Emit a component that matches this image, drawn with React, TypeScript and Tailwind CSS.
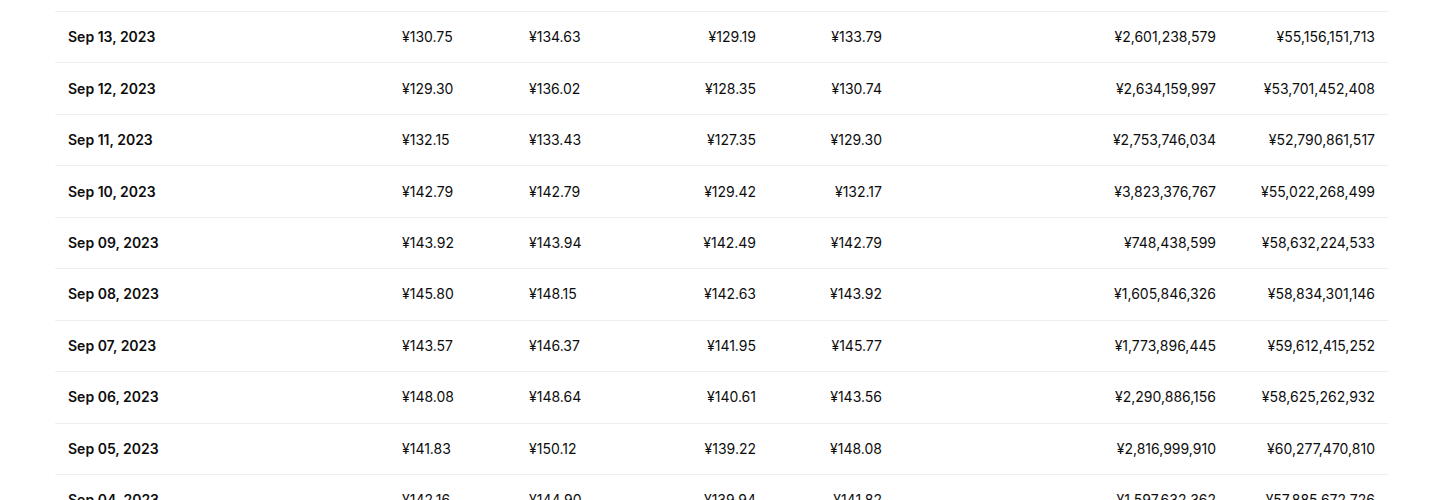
import React from "react";

type Row = {
  date: string;
  open: string;
  high: string;
  low: string;
  close: string;
  volume: string;
  marketCap: string;
};

const rows: Row[] = [
  { date: "Sep 13, 2023", open: "¥130.75", high: "¥134.63", low: "¥129.19", close: "¥133.79", volume: "¥2,601,238,579", marketCap: "¥55,156,151,713" },
  { date: "Sep 12, 2023", open: "¥129.30", high: "¥136.02", low: "¥128.35", close: "¥130.74", volume: "¥2,634,159,997", marketCap: "¥53,701,452,408" },
  { date: "Sep 11, 2023", open: "¥132.15", high: "¥133.43", low: "¥127.35", close: "¥129.30", volume: "¥2,753,746,034", marketCap: "¥52,790,861,517" },
  { date: "Sep 10, 2023", open: "¥142.79", high: "¥142.79", low: "¥129.42", close: "¥132.17", volume: "¥3,823,376,767", marketCap: "¥55,022,268,499" },
  { date: "Sep 09, 2023", open: "¥143.92", high: "¥143.94", low: "¥142.49", close: "¥142.79", volume: "¥748,438,599", marketCap: "¥58,632,224,533" },
  { date: "Sep 08, 2023", open: "¥145.80", high: "¥148.15", low: "¥142.63", close: "¥143.92", volume: "¥1,605,846,326", marketCap: "¥58,834,301,146" },
  { date: "Sep 07, 2023", open: "¥143.57", high: "¥146.37", low: "¥141.95", close: "¥145.77", volume: "¥1,773,896,445", marketCap: "¥59,612,415,252" },
  { date: "Sep 06, 2023", open: "¥148.08", high: "¥148.64", low: "¥140.61", close: "¥143.56", volume: "¥2,290,886,156", marketCap: "¥58,625,262,932" },
  { date: "Sep 05, 2023", open: "¥141.83", high: "¥150.12", low: "¥139.22", close: "¥148.08", volume: "¥2,816,999,910", marketCap: "¥60,277,470,810" },
  { date: "Sep 04, 2023", open: "¥142.16", high: "¥144.90", low: "¥139.94", close: "¥141.82", volume: "¥1,597,632,362", marketCap: "¥57,885,672,726" },
];

export default function App() {
  return (
    <div className="h-[500px] overflow-hidden bg-white font-['Inter',sans-serif] text-sm text-[#0d0d0d]">
      {/* history table, scrolled part-way down */}
      <div className="ml-[55px] mt-[11px] w-[1333px] border-t border-[#efefef]">
        {rows.map((r) => (
          <div
            key={r.date}
            className="grid h-[51.45px] grid-cols-[334px_127px_124px_129px_126px_334px_159px] items-center border-b border-[#efefef]"
          >
            <div className="pl-[13px] font-semibold">{r.date}</div>
            <div className="pl-[13px]">{r.open}</div>
            <div className="pl-[13px]">{r.high}</div>
            <div className="pr-[13px] text-right">{r.low}</div>
            <div className="pr-[13px] text-right">{r.close}</div>
            <div className="pr-[13px] text-right">{r.volume}</div>
            <div className="pr-[13px] text-right">{r.marketCap}</div>
          </div>
        ))}
      </div>
    </div>
  );
}
